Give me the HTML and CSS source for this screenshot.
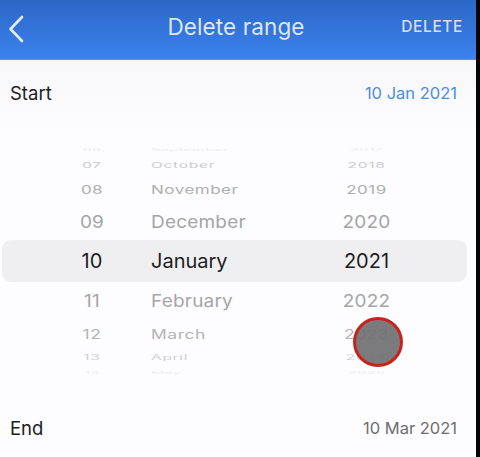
FILE: index.html
```html
<!DOCTYPE html>
<html>
<head>
<meta charset="utf-8">
<link rel="stylesheet" href="styles.css">
</head>
<body>
<div class="screen">
  <div class="app">
    <header class="topbar">
      <svg class="back" width="18" height="28" viewBox="0 0 18 28"><polyline points="15,2 3.5,14 15,26" fill="none" stroke="#e6ecf6" stroke-width="2.6" stroke-linecap="round" stroke-linejoin="round"/></svg>
      <h1 class="title">Delete range</h1>
      <span class="action">DELETE</span>
    </header>
    <div class="row-field start">
      <span class="label">Start</span>
      <span class="value blue">10 Jan 2021</span>
    </div>
    <div class="picker">
      <div class="prow p6"><span class="d">06</span><span class="m">September</span><span class="y">2017</span></div>
      <div class="prow p7"><span class="d">07</span><span class="m">October</span><span class="y">2018</span></div>
      <div class="prow p8"><span class="d">08</span><span class="m">November</span><span class="y">2019</span></div>
      <div class="prow p9"><span class="d">09</span><span class="m">December</span><span class="y">2020</span></div>
      <div class="prow p10"><span class="d">10</span><span class="m">January</span><span class="y">2021</span></div>
      <div class="prow p11"><span class="d">11</span><span class="m">February</span><span class="y">2022</span></div>
      <div class="prow p12"><span class="d">12</span><span class="m">March</span><span class="y">2023</span></div>
      <div class="prow p13"><span class="d">13</span><span class="m">April</span><span class="y">2024</span></div>
      <div class="prow p14"><span class="d">14</span><span class="m">May</span><span class="y">2025</span></div>
      <div class="touch"></div>
    </div>
    <div class="row-field end">
      <span class="label">End</span>
      <span class="value gray">10 Mar 2021</span>
    </div>
  </div>
  <div class="edge"></div>
</div>
</body>
</html>
```
FILE: styles.css
```css
html, body { margin: 0; padding: 0; }
body { font-family: Inter, "Noto Sans", sans-serif; background: #000; }
.screen { display: flex; width: 480px; height: 457px; overflow: hidden; }
.app { width: 476px; height: 457px; background: linear-gradient(#f7f7f9 60px, #fdfcfe 130px, #fdfcfe); display: flex; flex-direction: column; }
.edge { width: 4px; background: #050505; }

.topbar { height: 60px; flex: none; box-sizing: border-box; display: flex; align-items: center; padding: 0 13px 6px 7px; background: linear-gradient(#2d67c6, #3a82ee); border-bottom: 1px solid #5a98ee; position: relative; }
.back { display: block; margin-top: 4px; }
.title { position: absolute; left: 0; right: 0; top: 13px; margin: 0; text-align: center; font-size: 22.5px; font-weight: 400; color: #dfe6ef; letter-spacing: 0.1px; padding-right: 4px; }
.action { margin-left: auto; font-size: 15.5px; letter-spacing: 0.6px; color: #d7dfea; font-weight: 500; }

.row-field { display: flex; align-items: center; justify-content: space-between; padding: 0 19px 0 10px; flex: none; }
.row-field.start { height: 68px; padding-bottom: 3px; box-sizing: border-box; }
.row-field.end { height: 90px; padding-top: 19px; box-sizing: border-box; }
.label { font-size: 18.5px; color: #202022; }
.value { font-size: 16.5px; }
.blue { color: #4a8ee2; }
.gray { color: #6e6e72; }

.picker { position: relative; padding-top: 15px; height: 245px; box-sizing: border-box; flex: none; }
.prow { display: flex; align-items: center; overflow: hidden; margin: 0 9px 0 2px; }
.prow span { display: block; white-space: nowrap; box-sizing: border-box; }
.d { width: 120px; padding-left: 60px; text-align: center; }
.m { width: 120px; padding-left: 29px; }
.y { width: 125px; margin-left: 62px; text-align: center; }

.p6 { height: 12px; color: #ececec; font-size: 15px; }
.p6 span { transform: scaleY(0.2); }
.p7 { height: 20px; color: #cbcbcd; font-size: 15.5px; letter-spacing: 0.7px; }
.p7 span { transform: scaleY(0.5); }
.p8 { height: 29px; color: #afafb1; font-size: 17px; letter-spacing: 0.5px; }
.p8 span { transform: scaleY(0.72); }
.p9 { height: 36px; color: #a4a4a6; font-size: 19px; letter-spacing: 0.2px; }
.p9 span { transform: scaleY(0.9); }
.p10 { height: 42px; color: #1d1d1f; font-size: 20px; background: #efeff1; border-radius: 9px; }
.p11 { height: 38px; color: #a6a6a8; font-size: 19px; letter-spacing: 0.2px; }
.p11 span { transform: scaleY(0.9); }
.p12 { height: 28px; color: #b4b4b6; font-size: 17.5px; letter-spacing: 0.5px; }
.p12 span { transform: scaleY(0.72); }
.p13 { height: 19px; color: #d0d0d2; font-size: 15.5px; letter-spacing: 0.7px; }
.p13 span { transform: scaleY(0.45); }
.p14 { height: 10px; color: #ececee; font-size: 15px; }
.p14 span { transform: scaleY(0.2); }

.touch { position: absolute; left: 353px; top: 189px; width: 44px; height: 44px; border-radius: 50%; border: 3px solid #c8231a; background: rgba(112, 112, 114, 0.92); }
```
